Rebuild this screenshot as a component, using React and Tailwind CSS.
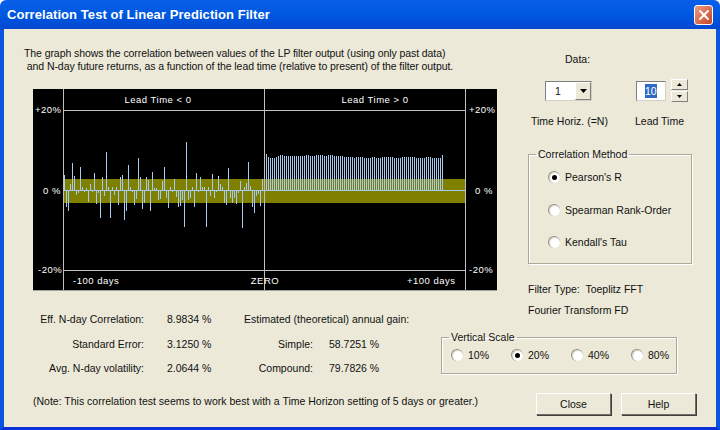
import React from 'react';
import { X } from 'lucide-react';

// bar heights in px around the zero line, left half of the chart (x = 64, 66, ...)
const leftBars = [
  15, -17, -21, 6, 27, 14, -5, -3, 23, 3, -2, 2, -12, 6, -2, 17, -14, -3, -28, 13, -6, 38, 3, -28, 3, -5, 3, -15, 13, 15,
  -30, -21, 25, 3, -2, -15, -9, 32, 13, -19, -13, 13, 10, -21, 18, 2, 2, -10,
  -9, 9, 23, -8, -18, 3, -2, 11, -7, -17, -16, -10, -37, 48, -10, -8, 3, -17, 17, -2, 13, 3, 3, -37, 3, -6, 16, -8, -2, 14, 6, 3,
  -13, -15, 22, -8, -13, -8, -14, -3, 9, -38, 3, 7, 28, 4, -17, -23, -6, -4, -16, 11,
];

// small wobble along the top of the right half
const rightTops = [
  154, 157, 158, 158, 158, 157, 156, 155, 155, 156, 156, 156, 156, 156, 156, 156, 156, 156, 156, 156, 155, 155, 156, 156, 156, 155, 155, 155, 155, 156,
  156, 155, 155, 155, 156, 156, 156, 156, 156, 157, 157, 157, 157, 157, 158, 157, 157, 157, 157, 158, 158, 158, 158, 157, 157, 158, 158, 158, 157, 157,
  157, 157, 157, 157, 158, 158, 158, 158, 157, 157, 157, 157, 157, 157, 157, 158, 158, 158, 158, 158, 157, 157, 157, 158, 158, 158, 158, 158, 155,
];

const Chart = () => (
  <svg width="464" height="202" className="block shrink-0 ml-[29px] mt-[16px]" style={{ fontFamily: '"Liberation Sans", sans-serif' }}>
    <rect width="464" height="202" fill="#000" />
    <rect x="31" y="90" width="401" height="24" fill="#808000" />
    <rect x="31" y="101" width="401" height="1" fill="#a6caf0" />
    {leftBars.map((v, i) => (
      <rect key={i} x={31 + i * 2} y={v > 0 ? 101 - v : 101} width="1" height={Math.abs(v)} fill="#a6caf0" />
    ))}
    {rightTops.map((top, i) => (
      <rect key={i} x={233 + i * 2} y={top - 89} width="1" height={190 - top + 1} fill="#a6caf0" />
    ))}
    <rect x="30" y="21" width="402" height="1" fill="#c0c0c0" />
    <rect x="30" y="181" width="402" height="1" fill="#c0c0c0" />
    <rect x="30" width="1" height="202" fill="#c0c0c0" />
    <rect x="231" width="1" height="202" fill="#c0c0c0" />
    <rect x="432" width="1" height="202" fill="#c0c0c0" />
    <rect y="201" width="464" height="1" fill="#a0a0a0" />
    <g fill="#fff" fontSize="9.5" letterSpacing="0.5">
      <text x="125" y="14" textAnchor="middle">Lead Time &lt; 0</text>
      <text x="342" y="14" textAnchor="middle">Lead Time &gt; 0</text>
      <text x="2" y="24">+20%</text>
      <text x="436" y="24">+20%</text>
      <text x="10" y="105">0 %</text>
      <text x="442" y="105">0 %</text>
      <text x="5" y="184">-20%</text>
      <text x="436" y="184">-20%</text>
      <text x="40" y="195">-100 days</text>
      <text x="232" y="195" textAnchor="middle">ZERO</text>
      <text x="374" y="195">+100 days</text>
    </g>
  </svg>
);

const Radio = ({ checked }) => (
  <span className="flex items-center justify-center w-[12px] h-[12px] rounded-full bg-white shrink-0 border-t border-l border-t-[#8f8f84] border-l-[#8f8f84] shadow-[inset_1px_1px_1px_#d8d6c8]">
    {checked && <span className="w-[5px] h-[5px] rounded-full bg-black" />}
  </span>
);

const GroupBox = ({ title, className, children }) => (
  <fieldset className={`min-w-0 border border-[#aca899] shadow-[inset_1px_1px_0_#fff,1px_1px_0_#fff] ${className}`}>
    <legend className="ml-[7px] px-[2px] leading-[14px]">{title}</legend>
    {children}
  </fieldset>
);

const SpinButton = ({ up }) => (
  <div className="flex items-center justify-center w-[17px] h-[11px] bg-[#ece9d8] border border-t-white border-l-white border-r-[#808080] border-b-[#808080]">
    <svg width="5" height="3">
      <path d={up ? 'M2.5 0 L5 3 L0 3 Z' : 'M0 0 L5 0 L2.5 3 Z'} fill="#000" />
    </svg>
  </div>
);

const DialogButton = ({ children }) => (
  <button className="w-[75px] h-[22px] bg-[#ece9d8] border border-t-white border-l-white border-r-[#716f64] border-b-[#716f64] shadow-[1px_1px_0_#404040]">
    {children}
  </button>
);

const App = () => {
  const stats = [
    ['Eff. N-day Correlation:', '8.9834 %', null, null],
    ['Standard Error:', '3.1250 %', 'Simple:', '58.7251 %'],
    ['Avg. N-day volatility:', '2.0644 %', 'Compound:', '79.7826 %'],
  ];

  return (
    <div
      className="w-[720px] h-[430px] flex flex-col overflow-hidden rounded-t-[6px] text-[10.5px] leading-[14px] text-[#111]"
      style={{ fontFamily: '"Liberation Sans", Arial, sans-serif' }}
    >
      {/* title bar */}
      <div className="h-[29px] shrink-0 flex items-center justify-between pl-[7px] pr-[7px] bg-gradient-to-b from-[#0a5fe8] via-[#0058e0] to-[#0348d2]">
        <span className="text-white font-bold text-[13px] tracking-[0.07px]">Correlation Test of Linear Prediction Filter</span>
        <div className="flex items-center justify-center w-[19px] h-[20px] rounded-[3px] border border-white bg-gradient-to-br from-[#ec9a80] to-[#c9401e]">
          <X size={16} strokeWidth={3} className="text-white" />
        </div>
      </div>

      {/* dialog body */}
      <div className="flex-1 min-h-0 border-x-4 border-b-[3px] border-x-[#0a55e0] border-b-[#0831d9] bg-[#ece9d8] grid grid-cols-[437px_83px_1fr] grid-rows-[275px_25px_1fr]">
        <div className="col-span-2 flex flex-col pt-[18px]">
          <p className="pl-[20px] whitespace-pre leading-[13px] tracking-[-0.08px]">
            {'The graph shows the correlation between values of the LP filter output (using only past data)\n and N-day future returns, as a function of the lead time (relative to present) of the filter output.'}
          </p>
          <Chart />
        </div>

        <div className="row-span-2 flex flex-col">
          <div className="pt-[23px] pl-[41px]">Data:</div>
          <div className="flex items-start mt-[13px] pl-[21px]">
            <div className="flex w-[47px] h-[20px] mt-[2px] bg-white border border-t-[#808080] border-l-[#808080] border-r-[#d4d0c8] border-b-[#d4d0c8]">
              <span className="flex-1 pl-[9px] leading-[18px]">1</span>
              <div className="flex items-center justify-center w-[16px] bg-[#ece9d8] border border-t-white border-l-white border-r-[#808080] border-b-[#808080]">
                <svg width="7" height="4">
                  <path d="M0 0 L7 0 L3.5 4 Z" fill="#000" />
                </svg>
              </div>
            </div>
            <div className="flex items-center w-[30px] h-[20px] ml-[44px] mt-[2px] pl-[8px] bg-white border border-t-[#808080] border-l-[#808080] border-r-[#d4d0c8] border-b-[#d4d0c8]">
              <span className="bg-[#316ac5] text-white leading-[14px]">10</span>
            </div>
            <div className="flex flex-col gap-px ml-[5px]">
              <SpinButton up />
              <SpinButton />
            </div>
          </div>
          <div className="flex mt-[12px] pl-[7px]">
            <span className="w-[104px] whitespace-nowrap">Time Horiz. (=N)</span>
            <span className="whitespace-nowrap">Lead Time</span>
          </div>

          <GroupBox title="Correlation Method" className="w-[164px] h-[117px] ml-[4px] mt-[19px]">
            <div className="flex flex-col gap-[18.5px] pl-[19px] pt-[9px]">
              <label className="flex items-center gap-[5px] h-[14px]"><Radio checked />Pearson's R</label>
              <label className="flex items-center gap-[5px] h-[14px]"><Radio />Spearman Rank-Order</label>
              <label className="flex items-center gap-[5px] h-[14px]"><Radio />Kendall's Tau</label>
            </div>
          </GroupBox>

          <div className="pl-[4px] mt-[18px]">Filter Type:&nbsp; Toeplitz FFT</div>
          <div className="pl-[4px] mt-[7px]">Fourier Transform FD</div>
        </div>

        {/* stats and note */}
        <div className="row-span-2 pt-[3px]">
          <div className="grid grid-cols-[140px_100px_69px_1fr] auto-rows-[24.5px] items-center">
            {stats.map(([label, value, gainLabel, gainValue]) => (
              <React.Fragment key={label}>
                <span className="text-right whitespace-nowrap">{label}</span>
                <span className="pl-[23px] whitespace-nowrap">{value}</span>
                {gainLabel ? (
                  <>
                    <span className="text-right whitespace-nowrap">{gainLabel}</span>
                    <span className="pl-[16px] whitespace-nowrap">{gainValue}</span>
                  </>
                ) : (
                  <span className="col-span-2 whitespace-nowrap">Estimated (theoretical) annual gain:</span>
                )}
              </React.Fragment>
            ))}
          </div>
          <p className="pl-[29px] mt-[13px] whitespace-nowrap">(Note: This correlation test seems to work best with a Time Horizon setting of 5 days or greater.)</p>
        </div>

        {/* vertical scale and buttons */}
        <div className="col-span-2 flex flex-col pt-[1px]">
          <GroupBox title="Vertical Scale" className="w-[236px] h-[44px]">
            <div className="flex pl-[9px] pt-[4px]">
              {['10%', '20%', '40%', '80%'].map((s) => (
                <label key={s} className="flex items-center gap-[5px] w-[60px] shrink-0">
                  <Radio checked={s === '20%'} />
                  {s}
                </label>
              ))}
            </div>
          </GroupBox>
          <div className="flex gap-[10px] pl-[95px] mt-[19px]">
            <DialogButton>Close</DialogButton>
            <DialogButton>Help</DialogButton>
          </div>
        </div>
      </div>
    </div>
  );
};

export default App;
